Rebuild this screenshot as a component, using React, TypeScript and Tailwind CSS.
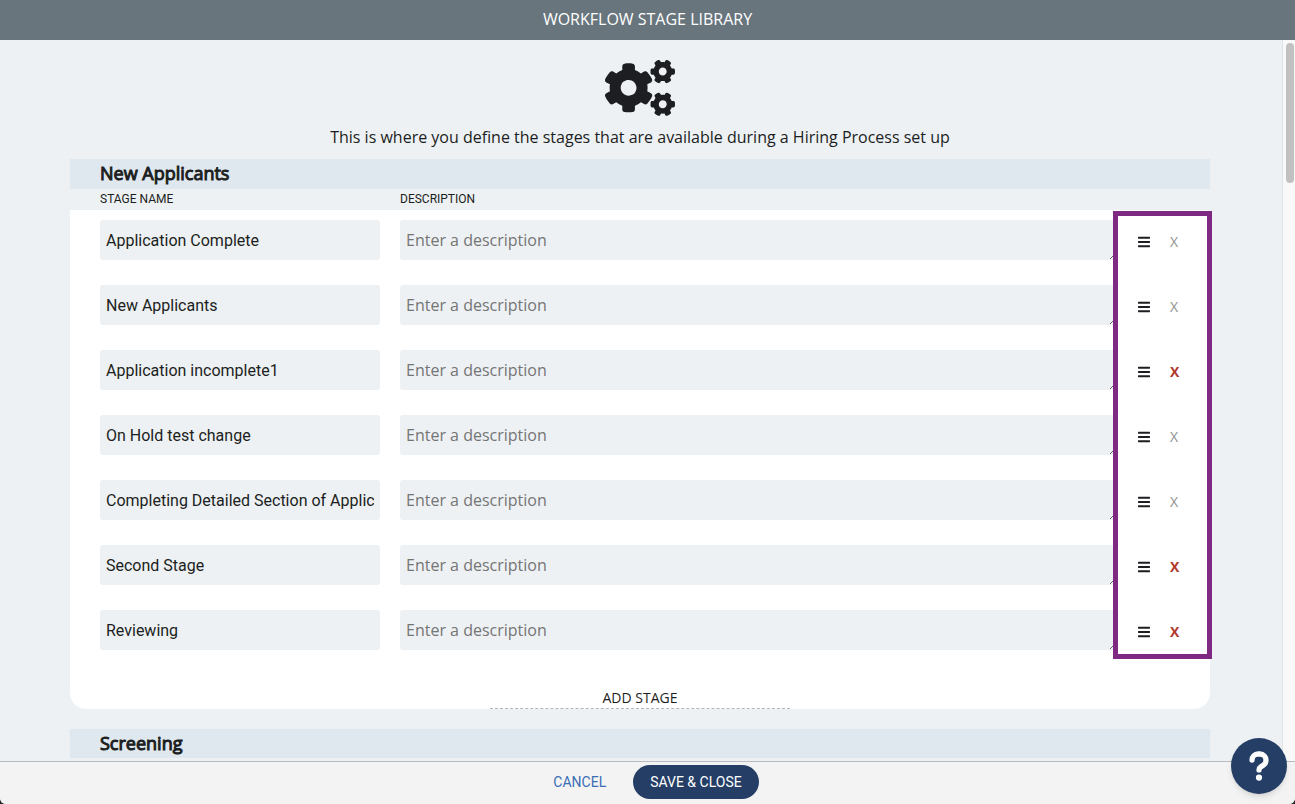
import React, { useState } from 'react';
import { FaBars, FaCogs } from 'react-icons/fa';
import { FaQuestion } from 'react-icons/fa6';

interface Stage {
  id: number;
  name: string;
  removable: boolean;
}

const initialStages: Stage[] = [
  { id: 1, name: 'Application Complete', removable: false },
  { id: 2, name: 'New Applicants', removable: false },
  { id: 3, name: 'Application incomplete1', removable: true },
  { id: 4, name: 'On Hold test change', removable: false },
  { id: 5, name: 'Completing Detailed Section of Application', removable: false },
  { id: 6, name: 'Second Stage', removable: true },
  { id: 7, name: 'Reviewing', removable: true },
];

const SectionTitle: React.FC<{ title: string }> = ({ title }) => (
  <h2 className="h-[30px] bg-[#e0e8ef] px-[30px] text-lg leading-7 [-webkit-text-stroke:1px_#1c1e21]">
    {title}
  </h2>
);

interface StageRowProps {
  stage: Stage;
  onRename: (name: string) => void;
  onRemove: () => void;
}

const StageRow: React.FC<StageRowProps> = ({ stage, onRename, onRemove }) => (
  <li className="flex h-10 items-start">
    <input
      type="text"
      aria-label="Stage name"
      value={stage.name}
      onChange={e => onRename(e.target.value)}
      className="mr-5 h-10 w-[280px] rounded-[3px] bg-[#edf1f4] px-1.5 font-['Roboto',sans-serif] text-base"
    />
    <textarea
      aria-label="Description"
      placeholder="Enter a description"
      rows={1}
      className="h-10 flex-1 resize overflow-hidden rounded-[3px] bg-[#edf1f4] px-1.5 py-2 text-base leading-6 placeholder:text-[#757575]"
    />
    <div className="ml-5 flex h-11 items-center gap-5">
      <button type="button" aria-label="Reorder stage">
        <FaBars className="h-3.5 w-3" />
      </button>
      <button
        type="button"
        aria-label="Remove stage"
        disabled={!stage.removable}
        onClick={onRemove}
        className={
          stage.removable
            ? 'w-2.5 text-left text-sm font-bold text-[#b13a2e]'
            : 'w-2.5 text-left text-sm text-[#8f8f8f]'
        }
      >
        X
      </button>
    </div>
  </li>
);

const App: React.FC = () => {
  const [stages, setStages] = useState<Stage[]>(initialStages);

  const renameStage = (id: number, name: string) =>
    setStages(stages.map(s => (s.id === id ? { ...s, name } : s)));

  const removeStage = (id: number) => setStages(stages.filter(s => s.id !== id));

  const addStage = () => setStages([...stages, { id: Date.now(), name: '', removable: true }]);

  return (
    <div className="h-screen bg-[#2b2b2b] font-['Open_Sans',sans-serif] text-[#1c1e21]">
      <div className="flex h-full flex-col overflow-hidden rounded-b-md bg-[#edf1f4]">
        <header className="flex h-10 shrink-0 justify-center bg-[#68757d]">
          <h1 className="text-base leading-[38px] text-white">WORKFLOW STAGE LIBRARY</h1>
        </header>

        <div className="flex min-h-0 flex-1">
          <main className="mb-[3px] flex-1 overflow-y-auto pr-0.5 [scrollbar-width:none]">
            <div className="mx-auto max-w-[1140px]">
              <div className="flex flex-col items-center pt-5">
                <FaCogs className="h-14 w-[70px]" />
                <p className="mt-2.5 mb-2.5 text-base leading-[23px]">
                  This is where you define the stages that are available during a Hiring Process set up
                </p>
              </div>

              <section>
                <SectionTitle title="New Applicants" />
                <div className="flex h-[21px] gap-5 px-[30px] font-['Roboto',sans-serif] text-xs leading-5">
                  <span className="w-[280px]">STAGE NAME</span>
                  <span>DESCRIPTION</span>
                </div>
                <div className="rounded-b-2xl bg-white">
                  <div className="relative">
                    <ul className="flex flex-col gap-[25px] px-[30px] py-2.5">
                      {stages.map(stage => (
                        <StageRow
                          key={stage.id}
                          stage={stage}
                          onRename={name => renameStage(stage.id, name)}
                          onRemove={() => removeStage(stage.id)}
                        />
                      ))}
                    </ul>
                    <div className="pointer-events-none absolute top-px -right-0.5 bottom-px w-[99px] border-[5px] border-[#7f2a82]" />
                  </div>
                  <div className="flex justify-center pt-7">
                    <button
                      type="button"
                      onClick={addStage}
                      className="w-[300px] border-b border-dashed border-[#b5b5b5] text-sm leading-5"
                    >
                      ADD STAGE
                    </button>
                  </div>
                </div>
              </section>

              <section className="mt-5">
                <SectionTitle title="Screening" />
              </section>
            </div>
          </main>

          <div className="w-[13px] border-l border-[#e2e2e2] bg-[#f9f9f9] pt-[3px] pl-[3px]">
            <div className="h-[140px] w-2 rounded-full bg-[#c1c1c1]" />
          </div>
        </div>

        <footer className="flex h-[43px] shrink-0 items-start justify-center gap-2.5 border-t border-[#b9bcbf] bg-[#f3f3f3] pt-[3px] font-['Roboto',sans-serif] text-sm">
          <button type="button" className="h-[34px] px-[17px] text-[#3c6eb4]">
            CANCEL
          </button>
          <button type="button" className="h-[34px] rounded-full bg-[#243e66] px-[17px] text-white">
            SAVE &amp; CLOSE
          </button>
        </footer>
      </div>

      <button
        type="button"
        aria-label="Help"
        className="fixed right-2 bottom-2.5 flex size-14 items-center justify-center rounded-full bg-[#243e66] text-white shadow-md"
      >
        <FaQuestion className="h-8 w-5 overflow-visible stroke-current stroke-20" />
      </button>
    </div>
  );
};

export default App;
